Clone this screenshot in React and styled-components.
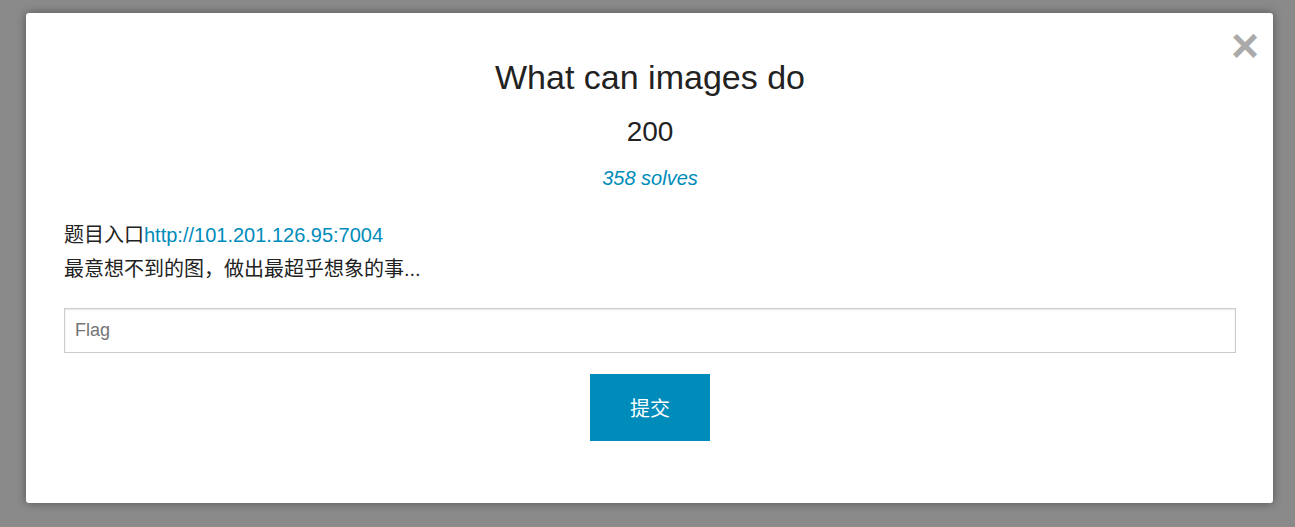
import React from "react";
import styled, { createGlobalStyle } from "styled-components";

const GlobalStyle = createGlobalStyle`
  html, body {
    margin: 0;
    padding: 0;
    background: #8a8a8a;
  }
  body {
    font-family: "Liberation Sans", Arial, "Noto Sans CJK SC", sans-serif;
    color: #222;
  }
  * { box-sizing: border-box; }
`;

const Overlay = styled.div`
  width: 1295px;
  height: 527px;
  overflow: hidden;
  background: #8a8a8a;
  display: flex;
  align-items: flex-start;
  padding: 13px 0 0 26px;
`;

const Modal = styled.div`
  position: relative;
  width: 1247px;
  background: #fff;
  border-radius: 3px;
  box-shadow: 0 0 10px rgba(0, 0, 0, 0.4);
  padding: 44px 37px 62px 38px;
  display: flex;
  flex-direction: column;
`;

const Close = styled.a`
  position: absolute;
  top: 9px;
  right: 14px;
  font-family: "Liberation Sans", Arial, sans-serif;
  font-size: 48px;
  font-weight: bold;
  line-height: 1;
  color: #aaa;
  cursor: pointer;
  text-decoration: none;
`;

const Title = styled.h2`
  margin: 0;
  text-align: center;
  font-weight: normal;
  font-size: 34px;
  line-height: 40px;
  color: #222;
`;

const Points = styled.h3`
  margin: 17px 0 0;
  text-align: center;
  font-weight: normal;
  font-size: 28px;
  line-height: 36px;
  color: #222;
`;

const Solves = styled.div`
  margin-top: 14px;
  text-align: center;
  font-style: italic;
  font-size: 20px;
  line-height: 28px;
  color: #008cba;
`;

const Description = styled.div`
  margin-top: 26px;
  font-family: "Liberation Sans", Arial, "Noto Sans CJK SC", sans-serif;
  font-size: 20px;
  line-height: 34px;
  color: #222;
`;

const Link = styled.a`
  color: #008cba;
  text-decoration: none;
`;

const FlagInput = styled.input`
  margin-top: 22px;
  width: 100%;
  height: 45px;
  border: 1px solid #ccc;
  box-shadow: inset 0 1px 2px rgba(0, 0, 0, 0.1);
  padding: 0 10px;
  font-family: "Liberation Sans", Arial, sans-serif;
  font-size: 18px;
  color: #222;
  background: #fff;
  outline: none;
  &::placeholder {
    color: #757575;
  }
`;

const SubmitRow = styled.div`
  margin-top: 21px;
  display: flex;
  justify-content: center;
`;

const SubmitButton = styled.button`
  width: 120px;
  height: 67px;
  border: none;
  background: #008cba;
  color: #fff;
  font-family: "Liberation Sans", Arial, "Noto Sans CJK SC", sans-serif;
  font-size: 20px;
  cursor: pointer;
  padding: 0;
`;

export default function App() {
  return (
    <>
      <GlobalStyle />
      <Overlay>
        <Modal>
          <Close>×</Close>
          <Title>What can images do</Title>
          <Points>200</Points>
          <Solves>358 solves</Solves>
          <Description>
            题目入口<Link href="#">http://101.201.126.95:7004</Link>
            <br />
            最意想不到的图，做出最超乎想象的事...
          </Description>
          <FlagInput placeholder="Flag" />
          <SubmitRow>
            <SubmitButton>提交</SubmitButton>
          </SubmitRow>
        </Modal>
      </Overlay>
    </>
  );
}
